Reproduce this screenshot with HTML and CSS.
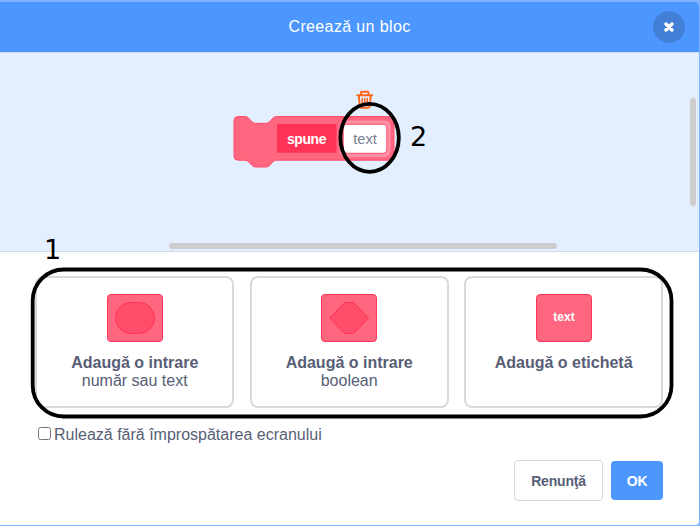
FILE: index.html
```html
<!DOCTYPE html>
<html lang="ro">
<head>
<meta charset="utf-8">
<title>Creează un bloc</title>
<link rel="stylesheet" href="styles.css">
</head>
<body>
<main class="modal">
  <header class="header">
    <h1 class="title">Creează un bloc</h1>
    <button class="close" aria-label="Închide">
      <svg width="10" height="10" viewBox="0 0 10 10"><path d="M2 2L8 8M8 2L2 8" stroke="#fff" stroke-width="3.4" stroke-linecap="round"/></svg>
    </button>
  </header>
  <section class="workspace">
    <svg class="block" width="700" height="198" viewBox="0 53 700 198">
      <g fill="none" stroke="#ff661a" stroke-width="1.9" stroke-linecap="round" stroke-linejoin="round">
        <path d="M357.3 95.2H372.2M361 95V92.4Q361 91.8 361.600 91.8H367.9Q368.500 91.8 368.500 92.4V95M358.8 95.500L359.8 106.200Q359.900 107.700 361.400 107.700H368.100Q369.600 107.700 369.700 106.200L370.800 95.500"/>
        <path d="M362.300 98.600V104M364.800 98.600V104M367.300 98.600V104" stroke-width="1.5"/>
      </g>
      <path fill="#ff6680" stroke="#ff4d6a" d="M234 120.500Q234 116.500 238 116.500H245Q247 116.500 248.500 118L252 121.700Q253.500 123.300 255.500 123.300H266Q268 123.300 269.500 121.700L273 118Q274.500 116.500 276.500 116.500H390Q394 116.500 394 120.500V156.200Q394 160.200 390 160.200H276.500Q274.500 160.200 273 161.700L269.500 165.400Q268 167 266 167H255.500Q253.500 167 252 165.400L248.500 161.700Q247 160.200 245 160.200H238Q234 160.200 234 156.200Z"/>
      <rect x="277" y="124" width="59.500" height="28.700" fill="#ff3355"/>
      <rect x="339.500" y="120.500" width="51" height="36.500" rx="6" fill="#ff8fa3"/>
      <rect x="343.200" y="124.300" width="43.600" height="29" rx="3.500" fill="#fff" stroke="#ff4d6a"/>
      <text x="306.500" y="144" class="block-label">spune</text>
      <text x="365" y="144" class="block-input">text</text>
    </svg>
    <div class="scroll-y"></div>
    <div class="scroll-x"></div>
  </section>
  <section class="body">
    <div class="options">
      <button class="option">
        <svg width="56" height="48"><rect class="tile" x=".5" y=".5" width="55" height="47" rx="3.500"/><rect class="slot" x="8.500" y="8.500" width="39" height="31" rx="15.500"/></svg>
        <strong>Adaugă o intrare</strong>
        <span>număr sau text</span>
      </button>
      <button class="option">
        <svg width="56" height="48"><rect class="tile" x=".5" y=".5" width="55" height="47" rx="3.500"/><path class="slot" d="M8.500 24L23 9.200Q23.800 8.500 25 8.500H31Q32.200 8.500 33 9.200L47.500 24L33 38.800Q32.200 39.500 31 39.500H25Q23.800 39.500 23 38.800Z"/></svg>
        <strong>Adaugă o intrare</strong>
        <span>boolean</span>
      </button>
      <button class="option">
        <svg width="56" height="48"><rect class="tile" x=".5" y=".5" width="55" height="47" rx="3.500"/><text x="28" y="27" class="tile-text">text</text></svg>
        <strong>Adaugă o etichetă</strong>
      </button>
    </div>
    <label class="check"><input type="checkbox"><span>Rulează fără împrospătarea ecranului</span></label>
    <div class="actions">
      <button class="cancel">Renunţă</button>
      <button class="ok">OK</button>
    </div>
  </section>
</main>
<svg class="notes" width="700" height="526">
  <g fill="none" stroke="#000" stroke-width="3.800">
    <ellipse cx="369.600" cy="137.800" rx="29.200" ry="34"/>
    <rect x="32.700" y="269.500" width="638.800" height="147" rx="31"/>
  </g>
  <text x="44" y="259">1</text>
  <text x="410" y="146">2</text>
</svg>
</body>
</html>
```
FILE: styles.css
```css
* { box-sizing: border-box; }

body {
  margin: 0;
  width: 700px;
  height: 526px;
  padding: 2px 1px 1px 0;
  overflow: hidden;
  background: #80b3ff;
  font-family: "Liberation Sans", Arial, sans-serif;
  color: #575e75;
}

button { font: inherit; color: inherit; padding: 0; }

.modal {
  height: 523px;
  background: #fff;
  border-radius: 0 4px 4px 0;
  overflow: hidden;
}

.header {
  display: grid;
  grid-template-columns: 58px 1fr 58px;
  align-items: center;
  height: 50px;
  background: #4c97ff;
}

.title {
  grid-column: 2;
  margin: 0;
  text-align: center;
  font-size: 16px;
  font-weight: 400;
  letter-spacing: .37px;
  color: #fff;
}

.close {
  display: flex;
  align-items: center;
  justify-content: center;
  width: 32px;
  height: 32px;
  margin-left: 12px;
  border: 0;
  border-radius: 50%;
  background: #4280d7;
}

.workspace {
  position: relative;
  height: 200px;
  border-top: 1px solid #cddaea;
  border-bottom: 1px solid #cddaea;
  background: #e3effe;
}

.block { display: block; }

.block-label, .block-input { text-anchor: middle; }

.block-label { font-size: 14px; font-weight: 700; letter-spacing: -.4px; fill: #fff; }
.block-input { font-size: 14.700px; fill: #7a8094; }

.scroll-x, .scroll-y {
  position: absolute;
  background: #cecdce;
  border-radius: 3px;
}

.scroll-x { left: 169px; top: 190px; width: 388px; height: 6px; }
.scroll-y { left: 690px; top: 45px; width: 6px; height: 108px; }

.body { padding: 24px 36px 0 35.400px; }

.options { display: flex; gap: 15.800px; }

.option {
  display: flex;
  flex: 1;
  flex-direction: column;
  align-items: center;
  height: 132px;
  padding-top: 16px;
  border: 2px solid #d9d9d9;
  border-radius: 8px;
  background: #fff;
  font-size: 16px;
  line-height: 18px;
}

.option svg { display: block; margin-bottom: 12px; }

.tile { fill: #ff6680; stroke: #ff3355; }
.slot { fill: #ff4d6a; stroke: #ff3355; }

.tile-text {
  font-size: 12px;
  font-weight: 700;
  text-anchor: middle;
  fill: #fff;
}

.check {
  display: flex;
  align-items: center;
  height: 18px;
  margin-top: 18px;
  font-size: 16px;
}

.check input { width: 13px; height: 13px; margin: 0 3px 3px 2.600px; }

.actions {
  display: flex;
  justify-content: flex-end;
  align-items: center;
  gap: 8px;
  margin-top: 16px;
}

.cancel, .ok {
  border-radius: 4px;
  font-size: 14px;
  font-weight: 700;
  letter-spacing: -.2px;
}

.cancel { width: 89px; height: 41px; border: 1px solid #d9d9d9; background: #fff; }
.ok { width: 52px; height: 39px; border: 0; background: #4c97ff; color: #fff; }

.notes {
  position: absolute;
  left: 0;
  top: 0;
  pointer-events: none;
}

.notes text { font: 27px "DejaVu Sans", sans-serif; fill: #000; }
```
